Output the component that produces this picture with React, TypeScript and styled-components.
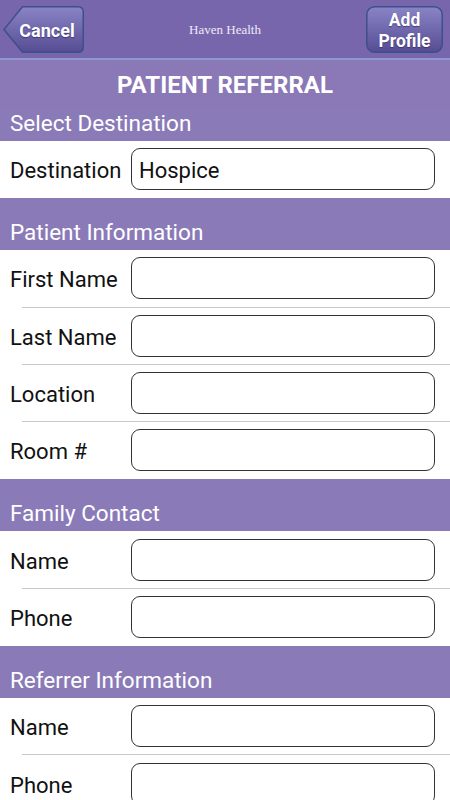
import React from "react";
import styled, { createGlobalStyle } from "styled-components";

const GlobalStyle = createGlobalStyle`
  html, body {
    margin: 0;
    padding: 0;
    background: #ffffff;
    overflow: hidden;
  }
  body {
    font-family: Roboto, "Noto Sans", "Liberation Sans", sans-serif;
  }
`;

const Screen = styled.div`
  width: 450px;
  height: 800px;
  overflow: hidden;
  background: #ffffff;
`;

const NavBar = styled.div`
  height: 57px;
  background: #7866ac;
  border-bottom: 2px solid #8e97d2;
  display: flex;
  align-items: center;
  justify-content: space-between;
  padding: 1px 7px 0 3px;
  box-sizing: content-box;
  position: relative;
`;

const NavTitle = styled.div`
  position: absolute;
  left: 0;
  right: 0;
  top: 22px;
  text-align: center;
  font-family: "Liberation Serif", "DejaVu Serif", serif;
  font-size: 13px;
  color: #eeeaf6;
  pointer-events: none;
`;

const NavButton = styled.div<{ $w: number; $h: number }>`
  position: relative;
  width: ${(p) => p.$w}px;
  height: ${(p) => p.$h}px;
  display: flex;
  align-items: center;
  justify-content: center;
  color: #ffffff;
  font-weight: 700;
  z-index: 1;
`;

const ButtonShape = styled.svg`
  position: absolute;
  inset: 0;
`;

const ButtonLabel = styled.span<{ $pad?: number; $size: number }>`
  position: relative;
  top: 1px;
  font-size: ${(p) => p.$size}px;
  line-height: 21px;
  text-align: center;
  padding-left: ${(p) => p.$pad || 0}px;
  text-shadow: 0 1px 1px rgba(30, 20, 70, 0.5);
`;

const TitleBand = styled.div`
  background: #8a79b6;
  color: #ffffff;
  text-align: center;
  font-weight: 700;
  font-size: 24px;
  height: 49px;
  line-height: 50px;
`;

const SectionHeader = styled.div<{ $h: number }>`
  background: #8a7bb8;
  color: #ffffff;
  font-size: 22.5px;
  height: ${(p) => p.$h}px;
  display: flex;
  align-items: flex-end;
  padding: 0 10px 5px;
  box-sizing: border-box;
`;

const Row = styled.div<{ $sep: boolean }>`
  height: 57.3px;
  display: flex;
  align-items: center;
  padding: 0 15px 0 10px;
  position: relative;
  box-sizing: border-box;
  &::after {
    content: "";
    display: ${(p) => (p.$sep ? "block" : "none")};
    position: absolute;
    left: 22px;
    right: 0;
    bottom: 0;
    height: 1px;
    background: #c9c9c9;
  }
`;

const Label = styled.div`
  width: 121px;
  flex: none;
  font-size: 22px;
  color: #111111;
  white-space: nowrap;
  padding-top: 2px;
`;

const Field = styled.div`
  flex: 1;
  height: 42px;
  border: 1.5px solid #333333;
  border-radius: 9px;
  box-sizing: border-box;
  display: flex;
  align-items: center;
  padding: 2px 0 0 7px;
  font-size: 22px;
  color: #111111;
  background: #ffffff;
  margin-top: -1px;
`;

const sections = [
  { title: "Patient Information", rows: [["First Name", ""], ["Last Name", ""], ["Location", ""], ["Room #", ""]] },
  { title: "Family Contact", rows: [["Name", ""], ["Phone", ""]] },
  { title: "Referrer Information", rows: [["Name", ""], ["Phone", ""]] },
];

const App: React.FC = () => {
  return (
    <Screen>
      <GlobalStyle />
      <NavBar>
        <NavTitle>Haven Health</NavTitle>
        <NavButton $w={81} $h={47}>
          <ButtonShape width="81" height="47" viewBox="0 0 81 47">
            <defs>
              <linearGradient id="cg" x1="0" y1="0" x2="0" y2="1">
                <stop offset="0" stopColor="#8a84c6" />
                <stop offset="1" stopColor="#564c93" />
              </linearGradient>
            </defs>
            <path
              d="M19.5 0.75 H75 Q80.25 0.75 80.25 6 V41 Q80.25 46.25 75 46.25 H19.5 L0.9 23.5 Z"
              fill="url(#cg)"
              stroke="#3d4f8c"
              strokeWidth="1.5"
            />
          </ButtonShape>
          <ButtonLabel $size={18} $pad={7}>Cancel</ButtonLabel>
        </NavButton>
        <NavButton $w={77} $h={47}>
          <ButtonShape width="77" height="47" viewBox="0 0 77 47">
            <defs>
              <linearGradient id="ag" x1="0" y1="0" x2="0" y2="1">
                <stop offset="0" stopColor="#8a84c6" />
                <stop offset="1" stopColor="#564c93" />
              </linearGradient>
            </defs>
            <rect x="0.75" y="0.75" width="75.5" height="45.5" rx="8" fill="url(#ag)" stroke="#3d4f8c" strokeWidth="1.5" />
          </ButtonShape>
          <ButtonLabel $size={17.5}>
            Add
            <br />
            Profile
          </ButtonLabel>
        </NavButton>
      </NavBar>
      <TitleBand>PATIENT REFERRAL</TitleBand>
      <SectionHeader $h={32}>Select Destination</SectionHeader>
      <Row $sep={false}>
        <Label>Destination</Label>
        <Field>Hospice</Field>
      </Row>
      {sections.map((s) => (
        <React.Fragment key={s.title}>
          <SectionHeader $h={52}>{s.title}</SectionHeader>
          {s.rows.map(([label, value], i) => (
            <Row key={label + i} $sep={i < s.rows.length - 1 || s.title === "Referrer Information"}>
              <Label>{label}</Label>
              <Field>{value}</Field>
            </Row>
          ))}
        </React.Fragment>
      ))}
    </Screen>
  );
};

export default App;
